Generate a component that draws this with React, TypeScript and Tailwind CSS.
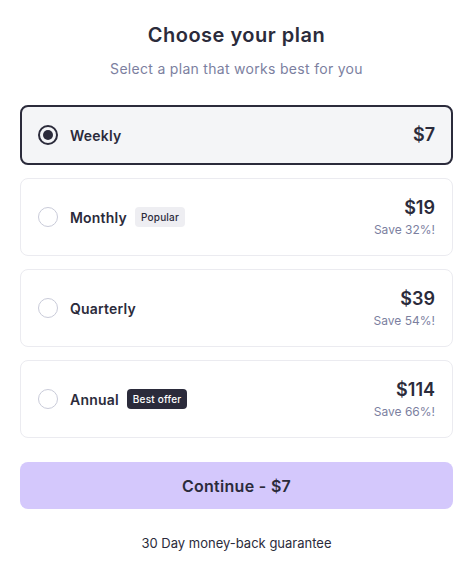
import React, { useState } from 'react';

type Plan = {
  id: string;
  name: string;
  price: string;
  save?: string;
  badge?: { text: string; dark: boolean };
};

const plans: Plan[] = [
  { id: 'weekly', name: 'Weekly', price: '$7' },
  { id: 'monthly', name: 'Monthly', price: '$19', save: 'Save 32%!', badge: { text: 'Popular', dark: false } },
  { id: 'quarterly', name: 'Quarterly', price: '$39', save: 'Save 54%!' },
  { id: 'annual', name: 'Annual', price: '$114', save: 'Save 66%!', badge: { text: 'Best offer', dark: true } },
];

const App = () => {
  const [selected, setSelected] = useState('weekly');
  const current = plans.find((p) => p.id === selected)!;

  return (
    <div className="min-h-screen bg-white font-['Inter','Liberation_Sans',sans-serif] text-[#2b2b3b]">
      <div className="px-5 pt-[21px]">
        <h1 className="text-center text-[20px] leading-[28px] font-semibold tracking-[0.5px]">Choose your plan</h1>
        <p className="mt-[10px] text-center text-[14px] leading-5 tracking-[0.3px] text-[#7c7f9f]">
          Select a plan that works best for you
        </p>

        <div className="mt-[26px] flex flex-col gap-[13px]">
          {plans.map((plan) => {
            const active = plan.id === selected;
            return (
              <button
                key={plan.id}
                onClick={() => setSelected(plan.id)}
                className={`flex w-full items-center rounded-lg text-left ${
                  active
                    ? 'border-2 border-[#2b2b3b] bg-[#f4f5f7] px-4 py-[16px]'
                    : 'border border-[#ebebf0] bg-white px-[17px] py-[17px]'
                }`}
              >
                <span
                  className={`flex h-5 w-5 shrink-0 items-center justify-center rounded-full ${
                    active ? 'border-2 border-[#2b2b3b]' : 'border border-[#c9cbd9]'
                  }`}
                >
                  {active && <span className="h-[10px] w-[10px] rounded-full bg-[#2b2b3b]" />}
                </span>
                <span className="ml-[12px] text-[14px] font-semibold tracking-[0.2px]">{plan.name}</span>
                {plan.badge && (
                  <span
                    className={`ml-2 rounded-[4px] px-[6px] py-[3px] text-[10px] leading-[14px] font-medium tracking-[0.2px] ${
                      plan.badge.dark ? 'bg-[#2b2b3b] text-white' : 'bg-[#eeeef2] text-[#2b2b3b]'
                    }`}
                  >
                    {plan.badge.text}
                  </span>
                )}
                <span className="ml-auto flex flex-col items-end">
                  <span className="text-[18px] leading-6 font-semibold">{plan.price}</span>
                  {plan.save && <span className="mt-[1px] text-[12px] leading-[17px] text-[#7c7f9f]">{plan.save}</span>}
                </span>
              </button>
            );
          })}
        </div>

        <button className="mt-[24px] h-[47px] w-full rounded-lg bg-[#d4c8fc] text-[16px] font-semibold tracking-[0.3px]">
          Continue - {current.price}
        </button>

        <p className="mt-[24px] text-center text-[13px] leading-5">30 Day money-back guarantee</p>
      </div>
    </div>
  );
};

export default App;
